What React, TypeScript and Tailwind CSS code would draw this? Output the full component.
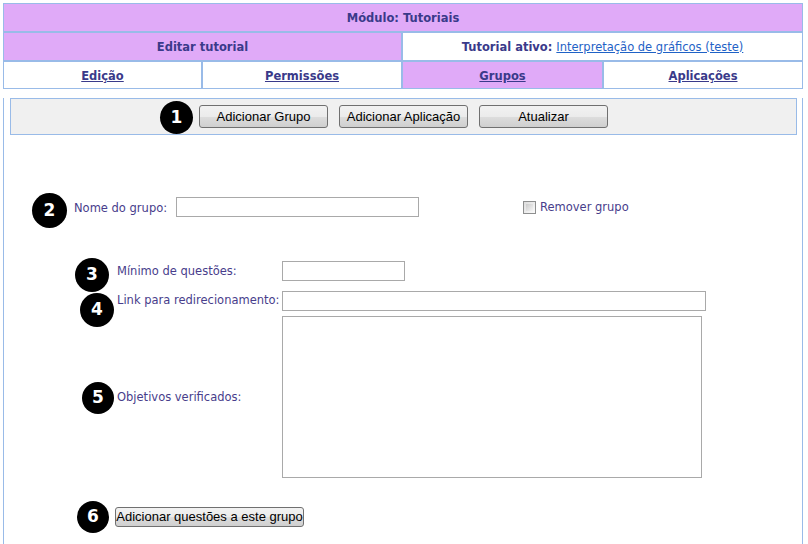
import React from "react";

const Badge = ({ n, left, top, size }: { n: string; left: number; top: number; size: number }) => (
  <div
    className="absolute flex items-center justify-center rounded-full bg-black text-white font-bold text-[17px] font-['DejaVu_Sans',sans-serif]"
    style={{ left, top, width: size, height: size }}
  >
    {n}
  </div>
);

const WinButton = ({ children, className = "" }: { children: React.ReactNode; className?: string }) => (
  <button
    className={
      "flex items-center justify-center border border-[#707070] rounded-[3px] bg-[linear-gradient(#f2f2f2_0%,#ebebeb_50%,#dddddd_51%,#cfcfcf_100%)] text-black font-['Liberation_Sans',Arial,sans-serif] " +
      className
    }
  >
    {children}
  </button>
);

export default function App() {
  return (
    <div className="relative w-[808px] h-[544px] bg-white overflow-hidden font-['DejaVu_Sans',Verdana,sans-serif] text-[11.5px]">
      <div className="ml-[3px] pt-[3px] w-[800px]">
        {/* header table */}
        <div className="flex flex-col gap-[2px] bg-[#99bbe8] p-px">
          <div className="h-[27px] pt-[2px] bg-[#e0aaf8] flex items-center justify-center font-bold text-[#3a3a8a]">
            Módulo: Tutoriais
          </div>
          <div className="h-[27px] flex gap-[2px]">
            <div className="w-[397px] pt-[2px] bg-[#e0aaf8] flex items-center justify-center font-bold text-[#3a3a8a]">
              Editar tutorial
            </div>
            <div className="flex-1 pt-[2px] bg-white flex items-center justify-center text-[#3a3a8a]">
              <span className="font-bold">Tutorial ativo:</span>
              <span className="ml-[4px] underline text-[#1f62c6]">Interpretação de gráficos (teste)</span>
            </div>
          </div>
          <div className="h-[26px] flex gap-[2px]">
            <div className="w-[197px] pt-[3px] bg-white flex items-center justify-center font-bold underline text-[#3a3a8a]">Edição</div>
            <div className="w-[198px] pt-[3px] bg-white flex items-center justify-center font-bold underline text-[#3a3a8a]">Permissões</div>
            <div className="w-[199px] pt-[3px] bg-[#e0aaf8] flex items-center justify-center font-bold underline text-[#3a3a8a]">Grupos</div>
            <div className="flex-1 pt-[3px] bg-white flex items-center justify-center font-bold underline text-[#3a3a8a]">Aplicações</div>
          </div>
        </div>

        {/* content */}
        <div className="border-x border-[#99bbe8] h-[460px] text-[#483d8b]">
          <div className="ml-[6px] mt-[9px] w-[787px] h-[37px] border border-[#99bbe8] bg-[#f0f0f0] flex items-start justify-center gap-[11px] pt-[6px]">
            <WinButton className="w-[129px] h-[23px] text-[13px]">Adicionar Grupo</WinButton>
            <WinButton className="w-[129px] h-[23px] text-[13px]">Adicionar Aplicação</WinButton>
            <WinButton className="w-[129px] h-[23px] text-[13px]">Atualizar</WinButton>
          </div>

          {/* Nome do grupo */}
          <div className="mt-[62px] pl-[70px] flex items-center h-[20px]">
            <span className="w-[102px] relative top-[2px]">Nome do grupo:</span>
            <div className="w-[243px] h-[20px] border border-[#a9a9a9] bg-white" />
            <div className="ml-[104px] flex items-center">
              <div className="w-[13px] h-[13px] border border-[#8e8f8f] bg-[linear-gradient(135deg,#dcdcdc,#fbfbfb)] p-[2px]">
                <div className="w-full h-full bg-[linear-gradient(135deg,#cbcbcb,#f4f4f4)]" />
              </div>
              <span className="ml-[4px] relative top-[1px]">Remover grupo</span>
            </div>
          </div>

          {/* Mínimo */}
          <div className="mt-[44px] pl-[113px] flex items-center">
            <span className="w-[165px] relative top-[1px]">Mínimo de questões:</span>
            <div className="w-[123px] h-[20px] border border-[#a9a9a9] bg-white" />
          </div>

          {/* Link */}
          <div className="mt-[10px] pl-[113px] flex items-center">
            <span className="w-[165px]">Link para redirecionamento:</span>
            <div className="w-[424px] h-[20px] border border-[#a9a9a9] bg-white" />
          </div>

          {/* Objetivos */}
          <div className="mt-[5px] pl-[113px] flex items-center">
            <span className="w-[165px] relative top-[1px]">Objetivos verificados:</span>
            <div className="w-[420px] h-[162px] border border-[#a9a9a9] bg-white" />
          </div>

          {/* Button */}
          <div className="mt-[29px] pl-[111px] flex">
            <WinButton className="w-[189px] h-[20px] text-[13px] rounded-[2px]">Adicionar questões a este grupo</WinButton>
          </div>
        </div>
      </div>

      <Badge n="1" left={160} top={101} size={33} />
      <Badge n="2" left={32} top={193} size={35} />
      <Badge n="3" left={75} top={258} size={34} />
      <Badge n="4" left={80} top={293} size={34} />
      <Badge n="5" left={82} top={382} size={32} />
      <Badge n="6" left={77} top={501} size={32} />
    </div>
  );
}
